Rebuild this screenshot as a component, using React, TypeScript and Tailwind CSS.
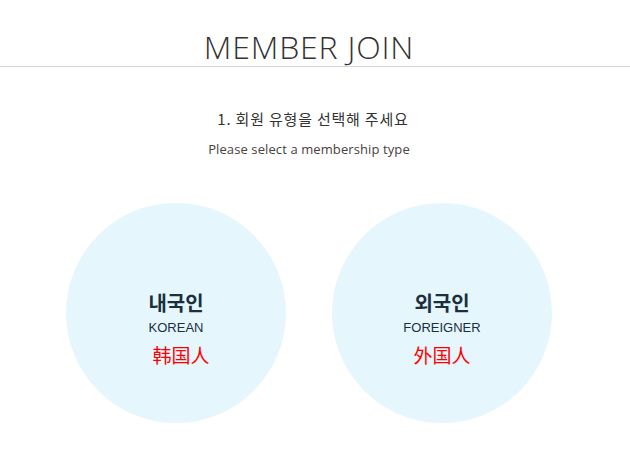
const types = [
  { ko: "내국인", en: "KOREAN", zh: "韩国人", shift: "pl-[10px]" },
  { ko: "외국인", en: "FOREIGNER", zh: "外国人", shift: "pl-0" },
];

export default function App() {
  return (
    <div className="w-[630px] h-[458px] bg-white overflow-hidden font-['Noto_Sans','Noto_Sans_CJK_KR',sans-serif]">
      <div className="h-[67px] border-b border-[#d4d4d4]">
        <div className="w-[618px] h-full flex items-end justify-center">
          <h1 className="text-[32px] leading-[40px] font-light text-[#333] tracking-[0.8px] font-['Open_Sans',sans-serif] -mb-[1px]">
            MEMBER JOIN
          </h1>
        </div>
      </div>

      <div className="w-[618px]">
        <div className="flex flex-col items-center pt-[42px]">
          <p className="text-[15px] leading-[20px] tracking-[0.8px] pl-[8px] font-['Noto_Sans_CJK_KR',sans-serif] text-[#333]">1. 회원 유형을 선택해 주세요</p>
          <p className="text-[13px] leading-[20px] mt-[10px] tracking-[0.1px] font-['Open_Sans',sans-serif] text-[#4a4040]">Please select a membership type</p>
        </div>

        <div className="flex justify-center gap-[46px] pt-[44px]">
          {types.map((t) => (
            <button
              key={t.en}
              className="w-[220px] h-[220px] rounded-full bg-[#e5f6fd] flex flex-col items-center justify-center pt-[32px] cursor-pointer"
            >
              <span className="text-[20px] leading-[24px] font-bold text-[#1b2f3d] font-['Noto_Sans_CJK_KR',sans-serif]">{t.ko}</span>
              <span className="text-[13px] leading-[16px] text-[#1b2f3d] font-['Liberation_Sans',sans-serif] mt-[5px]">{t.en}</span>
              <span className={`text-[19px] leading-[26px] text-[#ff0000] font-['Noto_Sans_CJK_SC',sans-serif] mt-[6px] ${t.shift}`}>{t.zh}</span>
            </button>
          ))}
        </div>
      </div>
    </div>
  );
}
